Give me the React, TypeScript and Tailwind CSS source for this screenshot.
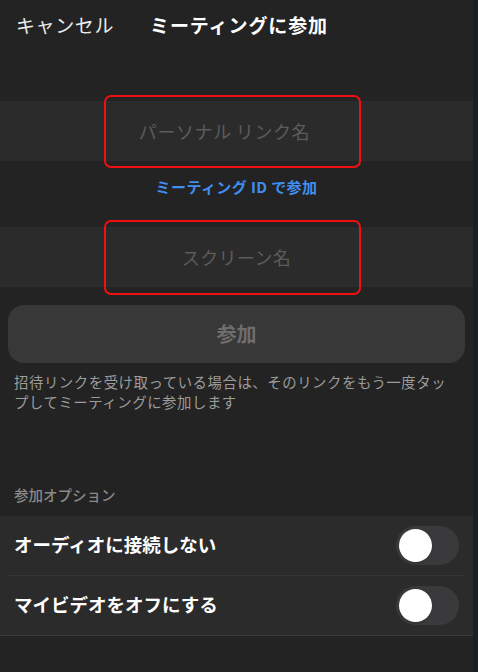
import { useState } from "react";

const font = { fontFamily: '"Noto Sans CJK JP", "Noto Sans", sans-serif' };

function Toggle({ on, onChange }: { on: boolean; onChange: () => void }) {
  return (
    <button
      onClick={onChange}
      className={`relative h-[39px] w-[63px] rounded-full p-[3px] flex items-center ${on ? "bg-[#34c759] justify-end" : "bg-[#3a3a3d] justify-start"}`}
    >
      <span className="block h-[33px] w-[33px] rounded-full bg-white shadow" />
    </button>
  );
}

export default function App() {
  const [noAudio, setNoAudio] = useState(false);
  const [noVideo, setNoVideo] = useState(false);

  return (
    <div className="flex h-[672px] w-[478px] overflow-hidden bg-[#232323]" style={font}>
      <div className="flex w-[473px] flex-col">
        {/* header */}
        <div className="flex h-[50px] items-center pl-[16px]">
          <span className="text-[19px] tracking-[0.6px] text-[#ececec]">キャンセル</span>
          <span className="ml-[36px] text-[19px] font-bold tracking-[0.9px] text-white">ミーティングに参加</span>
        </div>

        {/* personal link name */}
        <div className="relative mt-[51px] flex h-[60px] items-center justify-center bg-[#2b2b2b]">
          <span className="pr-[24px] text-[18px] tracking-[0.6px] text-[#5c5c5c]">
            パーソナル<span className="inline-block w-[4px]" />リンク名
          </span>
          <div className="absolute -top-[6px] -bottom-[7px] left-[104px] w-[257px] rounded-[7px] border-2 border-[#f01010]" />
        </div>

        <div className="flex h-[66px] items-start justify-center pt-[15px]">
          <span className="text-[15px] font-bold tracking-[0.4px] text-[#3f8ef0]">ミーティング ID で参加</span>
        </div>

        {/* screen name */}
        <div className="relative flex h-[60px] items-center justify-center bg-[#2b2b2b]">
          <span className="text-[18px] tracking-[0.4px] text-[#5c5c5c]">スクリーン名</span>
          <div className="absolute -top-[7px] -bottom-[8px] left-[104px] w-[257px] rounded-[7px] border-2 border-[#f01010]" />
        </div>

        {/* join button */}
        <button className="mx-[8px] mt-[18px] flex h-[58px] items-center justify-center rounded-[16px] bg-[#383838]">
          <span className="text-[20px] font-bold text-[#6e6e6e]">参加</span>
        </button>

        <p className="mt-[9px] px-[14px] text-[14.4px] leading-[19.5px] tracking-[0.55px] text-[#9c9c9c]">
          招待リンクを受け取っている場合は、そのリンクをもう一度タッ
          <br />
          プしてミーティングに参加します
        </p>

        {/* options */}
        <div className="mt-[73px] px-[14px] text-[14.5px] font-medium text-[#8a8a8a]">参加オプション</div>

        <div className="mt-[10px] border-b border-[#3a3a3a] bg-[#2b2b2b]">
          <div className="mx-[8px] flex h-[60px] items-center justify-between border-b border-[#363636] pl-[6px] pr-[6px]">
            <span className="text-[18.5px] font-bold text-white">オーディオに接続しない</span>
            <Toggle on={noAudio} onChange={() => setNoAudio(!noAudio)} />
          </div>
          <div className="flex h-[59px] items-center justify-between pl-[14px] pr-[14px]">
            <span className="text-[18.5px] font-bold text-white">マイビデオをオフにする</span>
            <Toggle on={noVideo} onChange={() => setNoVideo(!noVideo)} />
          </div>
        </div>
      </div>
      <div className="w-[5px] bg-[#1b1e25]" />
    </div>
  );
}
